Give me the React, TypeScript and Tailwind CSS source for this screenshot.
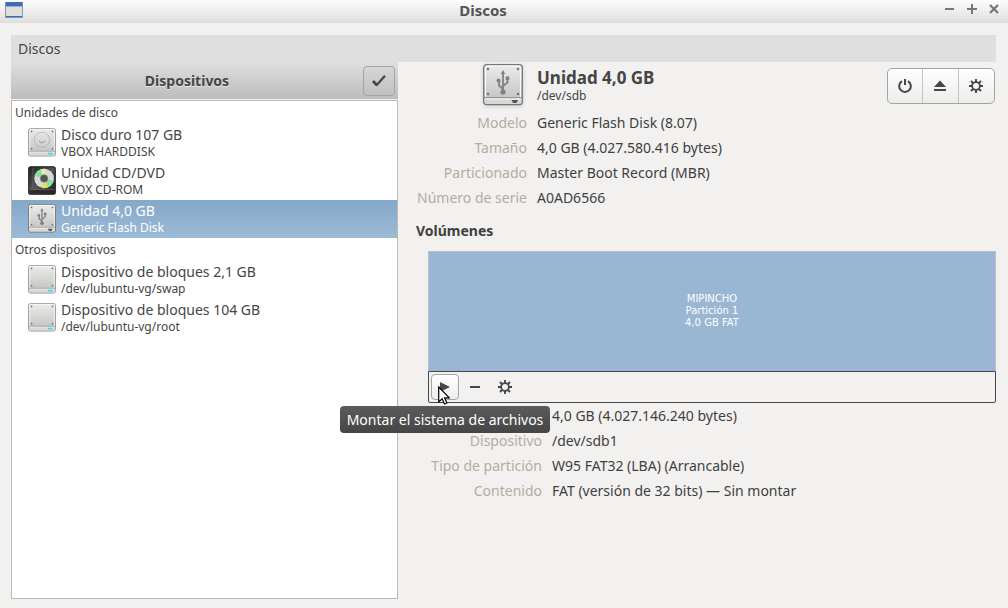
import React from 'react';
import clsx from 'clsx';

type DriveKind = 'hdd' | 'optical' | 'usb' | 'block';

interface Device {
  name: string;
  detail: string;
  kind: DriveKind;
  selected?: boolean;
}

const drives: Device[] = [
  { name: 'Disco duro 107 GB', detail: 'VBOX HARDDISK', kind: 'hdd' },
  { name: 'Unidad CD/DVD', detail: 'VBOX CD-ROM', kind: 'optical' },
  { name: 'Unidad 4,0 GB', detail: 'Generic Flash Disk', kind: 'usb', selected: true },
];

const otherDevices: Device[] = [
  { name: 'Dispositivo de bloques 2,1 GB', detail: '/dev/lubuntu-vg/swap', kind: 'block' },
  { name: 'Dispositivo de bloques 104 GB', detail: '/dev/lubuntu-vg/root', kind: 'block' },
];

const driveInfo = [
  ['Modelo', 'Generic Flash Disk (8.07)'],
  ['Tamaño', '4,0 GB (4.027.580.416 bytes)'],
  ['Particionado', 'Master Boot Record (MBR)'],
  ['Número de serie', 'A0AD6566'],
];

const volumeInfo = [
  ['Tamaño', '4,0 GB (4.027.146.240 bytes)'],
  ['Dispositivo', '/dev/sdb1'],
  ['Tipo de partición', 'W95 FAT32 (LBA) (Arrancable)'],
  ['Contenido', 'FAT (versión de 32 bits) — Sin montar'],
];

const UsbSymbol = () => (
  <g stroke="#808080" fill="#808080" strokeWidth="1.8">
    <path d="M20 9v19" />
    <path d="M20 25l-4-3.500v-5M20 22l4.500-3.500v-4" fill="none" />
    <path d="M20 6l2.200 4h-4.400z" stroke="none" />
    <circle cx="20" cy="28" r="2.600" stroke="none" />
    <circle cx="15.500" cy="16.500" r="2" stroke="none" />
    <rect x="22.700" y="12.500" width="3.600" height="3.600" stroke="none" />
  </g>
);

const DriveIcon = ({ kind, className }: { kind: DriveKind; className: string }) => {
  if (kind === 'optical') {
    return (
      <svg viewBox="0 0 40 42" preserveAspectRatio="none" className={className} aria-hidden="true">
        <defs>
          <linearGradient id="optical-body" x1="0" x2="1" y1="0" y2="1">
            <stop offset="0" stopColor="#222" />
            <stop offset=".5" stopColor="#555" />
            <stop offset="1" stopColor="#1a1a1a" />
          </linearGradient>
        </defs>
        <rect x="1" y="1" width="38" height="40" rx="3" fill="url(#optical-body)" stroke="#1c1c1c" strokeWidth="1.500" />
        <path d="M7 2v31M2 34h36" stroke="#666" strokeWidth="1" />
        <rect x="2" y="35" width="36" height="5" fill="#2c2c2c" />
        <circle cx="23" cy="18" r="14" fill="#d9dad8" />
        <path d="M23 18L9.500 14.500A14 14 0 0 1 18 5z" fill="#83e39a" />
        <path d="M23 18L18 5A14 14 0 0 1 25 4.200z" fill="#e9ec9b" />
        <path d="M23 18L36.500 21.500A14 14 0 0 1 28.500 31z" fill="#83e39a" />
        <path d="M23 18L28.500 31A14 14 0 0 1 20 31.700z" fill="#e5df66" />
        <circle cx="23" cy="18" r="5.500" fill="#555" stroke="#8a8a8a" />
      </svg>
    );
  }

  return (
    <svg viewBox="0 0 40 42" preserveAspectRatio="none" className={className} aria-hidden="true">
      <defs>
        <linearGradient id="drive-body" x1="0" x2="0" y1="0" y2="1">
          <stop offset="0" stopColor="#ececeb" />
          <stop offset="1" stopColor="#bebebd" />
        </linearGradient>
      </defs>
      <rect x=".7" y=".7" width="38.600" height="40" rx="3" fill="url(#drive-body)" stroke={kind === 'usb' ? '#777' : '#999'} strokeWidth="1.300" />
      <path d="M1.500 34h37v4a2 2 0 0 1-2 2h-33a2 2 0 0 1-2-2z" fill="#d8d8d7" />
      <path d="M1 33.700h38" stroke="#8c8c8b" />
      <path d="M2 35h36" stroke="#f3f3f2" />
      <path d="M2.500 33V4a2 2 0 0 1 2-2h31a2 2 0 0 1 2 2v29" fill="none" stroke="#fafafa" />
      <g fill="#777">
        <circle cx="5" cy="5" r="1.300" />
        <circle cx="35" cy="5" r="1.300" />
        <circle cx="5" cy="30" r="1.300" />
        <circle cx="35" cy="30" r="1.300" />
      </g>
      {kind === 'hdd' && (
        <g fill="none" stroke="#a9a9a8">
          <circle cx="20" cy="17" r="11" />
          <path d="M16 18.500a4.200 4.200 0 0 0 8 0" stroke="#8d8d8d" strokeWidth="1.300" />
        </g>
      )}
      {kind === 'usb' && <UsbSymbol />}
      {kind === 'usb' ? (
        <path d="M28.500 36h6.500l-1.500 3h-3.500z" fill="#555" />
      ) : (
        <rect x="28.500" y="35.800" width="6.500" height="2.600" fill="#3fe0e4" />
      )}
    </svg>
  );
};

const GearIcon = () => (
  <svg viewBox="0 0 14 14" className="h-3.5 w-3.5" fill="none" stroke="#474747" aria-hidden="true">
    <circle cx="7" cy="7" r="3.900" strokeWidth="1.800" />
    <path d="M7 0v3M7 11v3M0 7h3M11 7h3M2 2l2 2M10 10l2 2M12 2l-2 2M4 10l-2 2" strokeWidth="1.900" />
  </svg>
);

const DeviceRow = ({ device }: { device: Device }) => (
  <li>
    <button
      type="button"
      className={clsx(
        'flex h-[38px] w-full items-start gap-[5px] pl-4 text-left',
        device.selected ? 'bg-linear-to-b from-[#84a8c9] to-[#9cbad7] text-white' : 'text-[#454545]'
      )}
    >
      <DriveIcon kind={device.kind} className="mt-1 h-[29px] w-7 shrink-0" />
      <span className="flex flex-col pt-0.5">
        <span className="text-[14px] leading-[18px]">{device.name}</span>
        <span className="text-[12px] leading-[15px]">{device.detail}</span>
      </span>
    </button>
  </li>
);

const InfoRows = ({ rows }: { rows: string[][] }) => (
  <>
    {rows.map(([label, value]) => (
      <React.Fragment key={label}>
        <dt className="text-right text-[#b5aca0]">{label}</dt>
        <dd className="text-[#3f3f3f]">{value}</dd>
      </React.Fragment>
    ))}
  </>
);

const TitleBar = () => (
  <header className="flex h-[23px] items-start bg-linear-to-b from-[#fdfdfd] to-[#dedede] pr-[7px] pl-[5px] text-[#555]">
    <svg viewBox="0 0 18 16" className="mt-0.5 h-4 w-[18px]" aria-hidden="true">
      <rect x=".5" y=".5" width="17" height="15" fill="#dedede" stroke="#8896ab" />
      <rect x="1" width="16" height="4" fill="#3d6db1" />
      <rect x="1" y="4" width="16" height="1" fill="#91b1dc" />
      <rect x="1" y="14" width="16" height="1" fill="#3d6db1" />
    </svg>
    <h1 className="flex-1 text-center text-[15px] leading-5 font-bold">Discos</h1>
    <div className="flex items-center justify-end gap-2 pt-0.5">
      <button type="button" aria-label="Minimizar" className="flex h-3.5 w-3.5 items-center justify-center">
        <svg viewBox="0 0 14 14" stroke="#777" strokeWidth="2"><path d="M2 7h9" /></svg>
      </button>
      <button type="button" aria-label="Maximizar" className="flex h-3.5 w-3.5 items-center justify-center">
        <svg viewBox="0 0 14 14" stroke="#777" strokeWidth="2"><path d="M2 7h10M7 2v10" /></svg>
      </button>
      <button type="button" aria-label="Cerrar" className="flex h-3.5 w-3.5 items-center justify-center">
        <svg viewBox="0 0 14 14" stroke="#777" strokeWidth="2.200"><path d="M3 3l8 8M11 3l-8 8" /></svg>
      </button>
    </div>
  </header>
);

const Sidebar = () => (
  <aside className="flex w-[387px] shrink-0 flex-col">
    <div className="flex h-[37px] items-center bg-linear-to-b from-[#dfdfdf] to-[#bcbcbc] pr-[3px]">
      <h2 className="flex-1 text-center text-[14px] font-bold text-[#454545] [text-shadow:0_1px_0_#e8e8e8]">Dispositivos</h2>
      <button
        type="button"
        aria-label="Seleccionar dispositivos"
        className="flex h-[30px] w-8 items-center justify-center rounded border border-[#9ba3b5] bg-linear-to-b from-[#d6d6d6] to-[#c1c1c1]"
      >
        <svg viewBox="0 0 14 14" className="h-3.5 w-3.5" fill="none" stroke="#474747" aria-hidden="true">
          <path d="M1 7l4 4.200" strokeWidth="2.800" />
          <path d="M4.300 11.500L13 1.800" strokeWidth="2.200" />
        </svg>
      </button>
    </div>
    <div className="mt-px flex-1 border border-[#b9b8b3] bg-white">
      <h3 className="h-[23px] pl-[3px] text-[12px] leading-6 text-[#454545]">Unidades de disco</h3>
      <ul>{drives.map((device) => <DeviceRow key={device.name} device={device} />)}</ul>
      <h3 className="h-[23px] pl-[3px] text-[12px] leading-6 text-[#454545]">Otros dispositivos</h3>
      <ul>{otherDevices.map((device) => <DeviceRow key={device.name} device={device} />)}</ul>
    </div>
  </aside>
);

const DriveActions = () => (
  <div className="mt-1.5 mr-px grid h-9 w-27 grid-cols-3 divide-x divide-[#c5c4c2] rounded-[5px] border border-[#a5a4a2] bg-linear-to-b from-white to-[#ececeb]">
    <button type="button" aria-label="Apagar" className="flex items-center justify-center">
      <svg viewBox="0 0 14 14" className="h-3.5 w-3.5" fill="none" stroke="#474747" strokeWidth="2" aria-hidden="true">
        <path d="M4 2.200a5.800 5.800 0 1 0 6 0M7 0v6" />
      </svg>
    </button>
    <button type="button" aria-label="Expulsar" className="flex items-center justify-center">
      <svg viewBox="0 0 14 14" className="h-3.5 w-3.5" fill="#474747" aria-hidden="true">
        <path d="M7 1.500l6 6.500H1zM1 10h12v2H1z" />
      </svg>
    </button>
    <button type="button" aria-label="Opciones de la unidad" className="flex items-center justify-center">
      <GearIcon />
    </button>
  </div>
);

const VolumeToolbar = () => (
  <div className="flex h-8 items-center gap-0.5 rounded-b-xs border border-[#474747] pl-0.5">
    <div className="relative">
      <button
        type="button"
        aria-describedby="mount-tip"
        aria-label="Montar"
        className="flex h-[26px] w-7 items-center justify-center rounded border border-[#a5a4a2] bg-linear-to-b from-white to-[#ededec]"
      >
        <svg viewBox="0 0 12 12" className="h-3 w-3" fill="#474747" aria-hidden="true"><path d="M1 1l10 5-10 5z" /></svg>
      </button>
      <div
        id="mount-tip"
        role="tooltip"
        className="absolute top-8 -left-[91px] z-10 flex h-[27px] w-[210px] items-center justify-center rounded bg-linear-to-b from-[#5b5b5b] to-[#464646] text-[14px] whitespace-nowrap text-white"
      >
        Montar el sistema de archivos
      </div>
      <svg viewBox="0 0 12 19" className="pointer-events-none absolute top-3 left-[7px] z-20 h-[19px] w-3" aria-hidden="true">
        <path d="M.7 1v15l3.500-3.200 2.300 5.200 2.400-1-2.300-5.200h4.700z" fill="#fff" stroke="#000" strokeWidth="1.200" />
      </svg>
    </div>
    <button type="button" aria-label="Eliminar partición" className="flex h-[26px] w-7 items-center justify-center">
      <span className="h-0.5 w-2.5 bg-[#474747]" />
    </button>
    <button type="button" aria-label="Más acciones" className="flex h-[26px] w-7 items-center justify-center">
      <GearIcon />
    </button>
  </div>
);

const DrivePanel = () => (
  <section className="min-w-0 flex-1 pl-[18px]">
    <div className="flex h-12 items-start">
      <div className="flex w-[111px] shrink-0 justify-end pt-0.5 pr-1">
        <DriveIcon kind="usb" className="h-[42px] w-10 drop-shadow-sm" />
      </div>
      <div className="flex-1 pt-1 pl-2.5 text-[#454545]">
        <h2 className="text-[17px] leading-6 font-bold">Unidad 4,0 GB</h2>
        <p className="text-[12px] leading-3">/dev/sdb</p>
      </div>
      <DriveActions />
    </div>
    <dl className="grid grid-cols-[111px_1fr] gap-x-2.5 text-[14px] leading-[25px]">
      <InfoRows rows={driveInfo} />
    </dl>
    <h3 className="pt-[9px] text-[14px] leading-6 font-bold text-[#3f3f3f]">Volúmenes</h3>
    <div className="pt-2 pl-3">
      <button
        type="button"
        className="flex h-[120px] w-full flex-col items-center justify-center border border-b-0 border-[#bcbfc1] bg-[#99b6d3] pb-0.5 font-['DejaVu_Sans'] text-[10px] leading-3 text-white"
      >
        <span>MIPINCHO</span>
        <span>Partición 1</span>
        <span>4,0 GB FAT</span>
      </button>
      <VolumeToolbar />
      <dl className="grid grid-cols-[114px_1fr] gap-x-2.5 text-[14px] leading-[25px]">
        <InfoRows rows={volumeInfo} />
      </dl>
    </div>
  </section>
);

export default function App() {
  return (
    <div className="flex min-h-screen flex-col bg-[#f2f1ef] font-['Noto_Sans',sans-serif]">
      <TitleBar />
      <div className="flex flex-1 flex-col pt-3 pr-3 pb-[9px] pl-[11px]">
        <nav className="h-[27px] bg-[#dfdfdf] pl-[7px]">
          <button type="button" className="text-[14px] leading-[27px] text-[#454545]">Discos</button>
        </nav>
        <main className="flex flex-1">
          <Sidebar />
          <DrivePanel />
        </main>
      </div>
    </div>
  );
}
